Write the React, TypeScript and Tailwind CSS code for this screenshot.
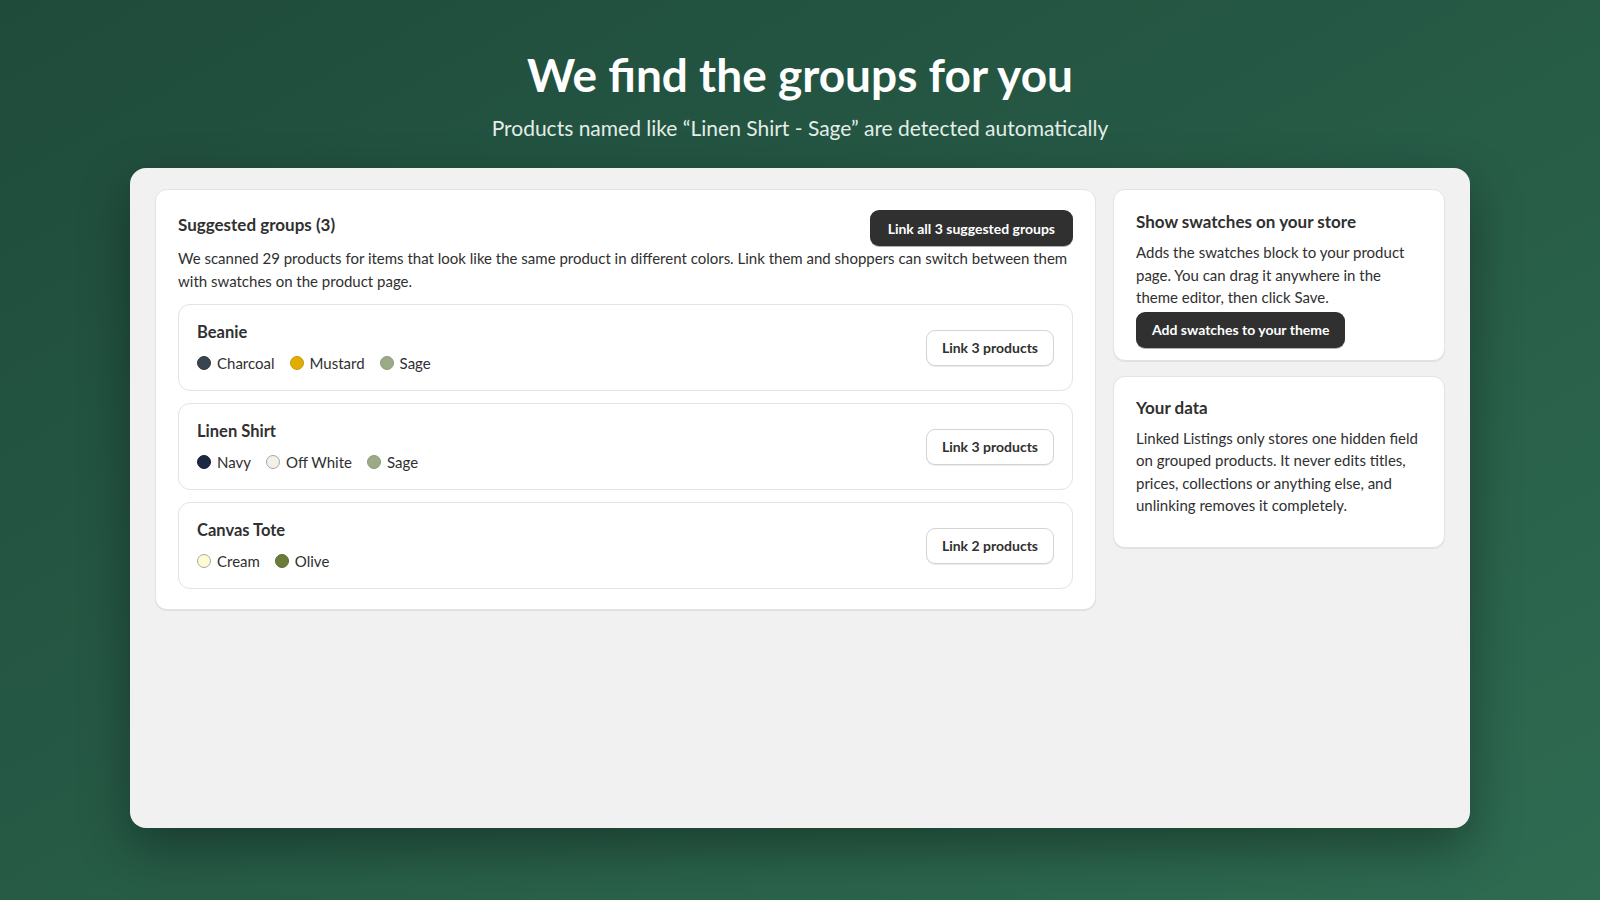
import React from 'react';

interface Swatch {
  name: string;
  color: string;
  ring: string;
}

interface Group {
  title: string;
  count: number;
  swatches: Swatch[];
}

const groups: Group[] = [
  {
    title: 'Beanie',
    count: 3,
    swatches: [
      { name: 'Charcoal', color: '#3a4450', ring: '#2f3740' },
      { name: 'Mustard', color: '#e2ac00', ring: '#c99a05' },
      { name: 'Sage', color: '#9caa88', ring: '#8c9a79' },
    ],
  },
  {
    title: 'Linen Shirt',
    count: 3,
    swatches: [
      { name: 'Navy', color: '#1d2844', ring: '#151d33' },
      { name: 'Off White', color: '#f3f0ea', ring: '#a8a8a8' },
      { name: 'Sage', color: '#9caa88', ring: '#8c9a79' },
    ],
  },
  {
    title: 'Canvas Tote',
    count: 2,
    swatches: [
      { name: 'Cream', color: '#fdfbd2', ring: '#a8a8a8' },
      { name: 'Olive', color: '#6b7c3a', ring: '#5c6c30' },
    ],
  },
];

const font = { fontFamily: 'Lato, "Noto Sans", sans-serif' };

function GroupRow({ group }: { group: Group }) {
  return (
    <div className="flex items-center justify-between rounded-xl border border-[#e3e3e3] bg-white px-[18px] py-4">
      <div>
        <div className="text-[16.5px] font-bold leading-[22px] text-[#303030]">{group.title}</div>
        <div className="mt-2 flex h-[23px] items-center gap-[15px]">
          {group.swatches.map((s) => (
            <div key={s.name} className="flex items-center gap-[6px]">
              <span
                className="inline-block h-[14px] w-[14px] rounded-full border"
                style={{ backgroundColor: s.color, borderColor: s.ring }}
              />
              <span className="text-[15px] leading-[22px] text-[#303030]">{s.name}</span>
            </div>
          ))}
        </div>
      </div>
      <button className="h-9 rounded-[9px] border border-[#d4d4d4] bg-white px-[15px] text-[14px] font-bold text-[#303030] shadow-[0_1px_0_rgba(0,0,0,0.08)]">
        Link {group.count} products
      </button>
    </div>
  );
}

export default function App() {
  return (
    <div
      className="flex min-h-screen flex-col items-center bg-linear-to-br from-[#1f4b3b] to-[#2e6b51] pt-[47px]"
      style={font}
    >
      <h1 className="text-[46px] font-bold leading-[56px] text-white">We find the groups for you</h1>
      <p className="mt-[10px] text-[21px] leading-[30px] text-[#e2eee7]">
        Products named like “Linen Shirt - Sage” are detected automatically
      </p>

      <div className="mt-[25px] grid h-[660px] w-[1340px] grid-cols-[941px_1fr] items-start gap-[17px] rounded-2xl bg-[#f1f1f1] px-[25px] pb-[25px] pt-[21px] shadow-[0_20px_50px_rgba(0,0,0,0.35)]">
        <div className="rounded-xl border border-[#e3e3e3] bg-white px-[22px] pb-5 pt-5 shadow-[0_1px_0_rgba(0,0,0,0.07)]">
          <div className="flex items-start justify-between">
            <h2 className="mt-1 text-[17px] font-bold leading-[22px] text-[#303030]">Suggested groups (3)</h2>
            <button className="h-9 rounded-[9px] bg-[#303030] px-[18px] text-[14px] font-bold text-white shadow-[0_1px_0_rgba(0,0,0,0.3)]">
              Link all 3 suggested groups
            </button>
          </div>
          <p className="mt-[1px] text-[15px] leading-[23px] text-[#303030]">
            We scanned 29 products for items that look like the same product in different colors. Link them and
            shoppers can switch between them with swatches on the product page.
          </p>
          <div className="mt-[11px] flex flex-col gap-3">
            {groups.map((g) => (
              <GroupRow key={g.title} group={g} />
            ))}
          </div>
        </div>

        <div className="flex flex-col gap-[15px]">
          <div className="rounded-xl border border-[#e3e3e3] bg-white px-[22px] pb-3 pt-[21px] shadow-[0_1px_0_rgba(0,0,0,0.07)]">
            <h3 className="text-[17px] font-bold leading-[22px] text-[#303030]">Show swatches on your store</h3>
            <p className="mt-2 text-[15px] leading-[22.5px] text-[#303030]">
              Adds the swatches block to your product page. You can drag it anywhere in the theme editor, then click
              Save.
            </p>
            <button className="mt-[3px] h-9 rounded-[9px] bg-[#303030] px-4 text-[14px] font-bold text-white shadow-[0_1px_0_rgba(0,0,0,0.3)]">
              Add swatches to your theme
            </button>
          </div>

          <div className="rounded-xl border border-[#e3e3e3] bg-white px-[22px] pb-[30px] pt-5 shadow-[0_1px_0_rgba(0,0,0,0.07)]">
            <h3 className="text-[17px] font-bold leading-[22px] text-[#303030]">Your data</h3>
            <p className="mt-2 text-[15px] leading-[22.5px] text-[#303030]">
              Linked Listings only stores one hidden field on grouped products. It never edits titles, prices,
              collections or anything else, and unlinking removes it completely.
            </p>
          </div>
        </div>
      </div>
    </div>
  );
}
